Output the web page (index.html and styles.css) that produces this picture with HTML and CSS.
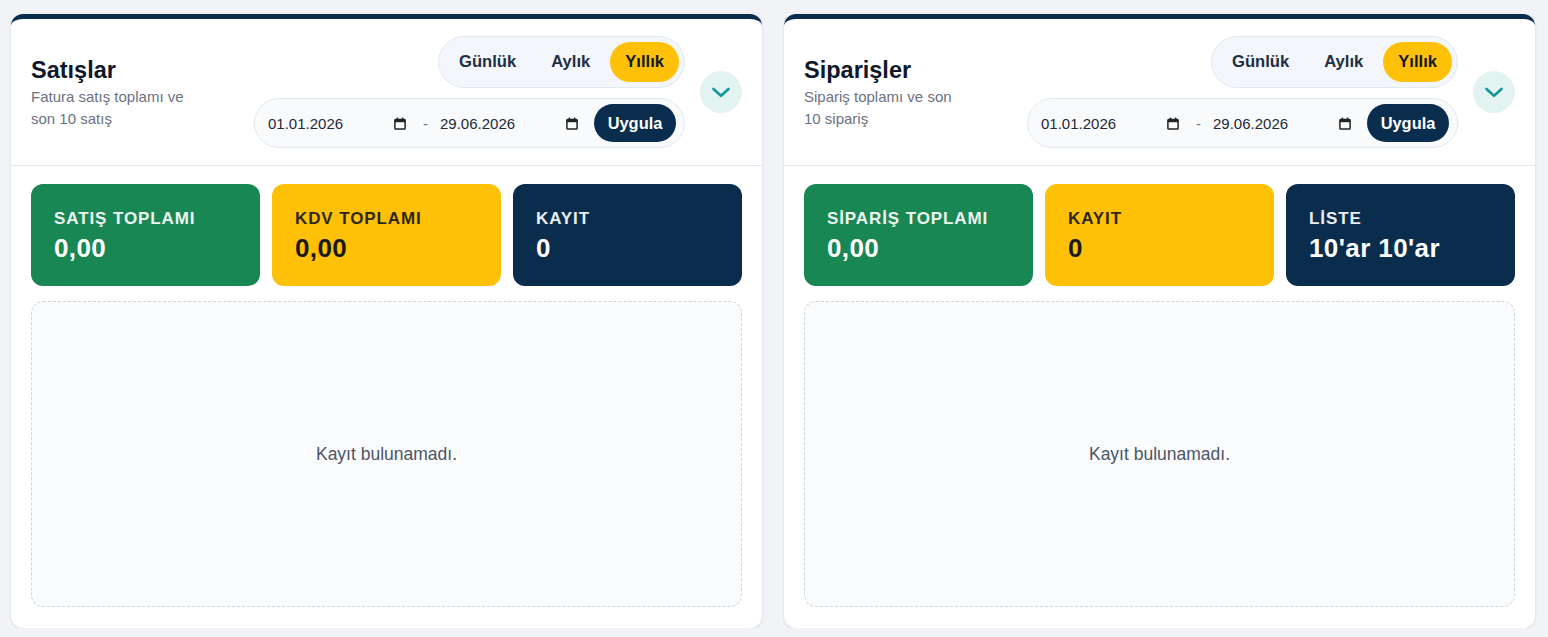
FILE: index.html
```html
<!DOCTYPE html>
<html lang="tr">
<head>
  <meta charset="UTF-8">
  <meta name="viewport" content="width=device-width, initial-scale=1.0">
  <title>Satışlar ve Siparişler</title>
  <link rel="stylesheet" href="styles.css">
</head>
<body>
  <div class="dashboard">
    <section class="panel">
      <header class="panel-header">
        <div class="panel-heading">
          <h2 class="panel-title">Satışlar</h2>
          <p class="panel-subtitle">Fatura satış toplamı ve son 10 satış</p>
        </div>
        <div class="panel-tools">
          <div class="tool-stack">
            <div class="period-switch">
              <button class="period-btn">Günlük</button>
              <button class="period-btn">Aylık</button>
              <button class="period-btn active">Yıllık</button>
            </div>
            <div class="date-range">
              <div class="date-field">
                <span>01.01.2026</span>
                <svg class="cal-icon" viewBox="0 0 12 13"><rect x="0.9" y="2.4" width="10.2" height="9.7" rx="0.8" fill="none" stroke="#222" stroke-width="1.5"/><rect x="0.9" y="2.4" width="10.2" height="2.8" fill="#222"/><rect x="2.6" y="0.6" width="1.6" height="2.4" fill="#222"/><rect x="7.8" y="0.6" width="1.6" height="2.4" fill="#222"/></svg>
              </div>
              <span class="date-sep">-</span>
              <div class="date-field">
                <span>29.06.2026</span>
                <svg class="cal-icon" viewBox="0 0 12 13"><rect x="0.9" y="2.4" width="10.2" height="9.7" rx="0.8" fill="none" stroke="#222" stroke-width="1.5"/><rect x="0.9" y="2.4" width="10.2" height="2.8" fill="#222"/><rect x="2.6" y="0.6" width="1.6" height="2.4" fill="#222"/><rect x="7.8" y="0.6" width="1.6" height="2.4" fill="#222"/></svg>
              </div>
              <button class="apply-btn">Uygula</button>
            </div>
          </div>
          <button class="collapse-btn">
            <svg viewBox="0 0 24 24"><path d="M4.5 9 L12 15.8 L19.5 9" fill="none" stroke="#17979b" stroke-width="2.7" stroke-linecap="round" stroke-linejoin="round"/></svg>
          </button>
        </div>
      </header>
      <div class="panel-body">
        <div class="stats">
          <div class="stat-card green">
            <span class="stat-label">SATIŞ TOPLAMI</span>
            <span class="stat-value">0,00</span>
          </div>
          <div class="stat-card yellow">
            <span class="stat-label">KDV TOPLAMI</span>
            <span class="stat-value">0,00</span>
          </div>
          <div class="stat-card navy">
            <span class="stat-label">KAYIT</span>
            <span class="stat-value">0</span>
          </div>
        </div>
        <div class="empty-box">Kayıt bulunamadı.</div>
      </div>
    </section>

    <section class="panel">
      <header class="panel-header">
        <div class="panel-heading">
          <h2 class="panel-title">Siparişler</h2>
          <p class="panel-subtitle">Sipariş toplamı ve son 10 sipariş</p>
        </div>
        <div class="panel-tools">
          <div class="tool-stack">
            <div class="period-switch">
              <button class="period-btn">Günlük</button>
              <button class="period-btn">Aylık</button>
              <button class="period-btn active">Yıllık</button>
            </div>
            <div class="date-range">
              <div class="date-field">
                <span>01.01.2026</span>
                <svg class="cal-icon" viewBox="0 0 12 13"><rect x="0.9" y="2.4" width="10.2" height="9.7" rx="0.8" fill="none" stroke="#222" stroke-width="1.5"/><rect x="0.9" y="2.4" width="10.2" height="2.8" fill="#222"/><rect x="2.6" y="0.6" width="1.6" height="2.4" fill="#222"/><rect x="7.8" y="0.6" width="1.6" height="2.4" fill="#222"/></svg>
              </div>
              <span class="date-sep">-</span>
              <div class="date-field">
                <span>29.06.2026</span>
                <svg class="cal-icon" viewBox="0 0 12 13"><rect x="0.9" y="2.4" width="10.2" height="9.7" rx="0.8" fill="none" stroke="#222" stroke-width="1.5"/><rect x="0.9" y="2.4" width="10.2" height="2.8" fill="#222"/><rect x="2.6" y="0.6" width="1.6" height="2.4" fill="#222"/><rect x="7.8" y="0.6" width="1.6" height="2.4" fill="#222"/></svg>
              </div>
              <button class="apply-btn">Uygula</button>
            </div>
          </div>
          <button class="collapse-btn">
            <svg viewBox="0 0 24 24"><path d="M4.5 9 L12 15.8 L19.5 9" fill="none" stroke="#17979b" stroke-width="2.7" stroke-linecap="round" stroke-linejoin="round"/></svg>
          </button>
        </div>
      </header>
      <div class="panel-body">
        <div class="stats">
          <div class="stat-card green">
            <span class="stat-label">SİPARİŞ TOPLAMI</span>
            <span class="stat-value">0,00</span>
          </div>
          <div class="stat-card yellow">
            <span class="stat-label">KAYIT</span>
            <span class="stat-value">0</span>
          </div>
          <div class="stat-card navy">
            <span class="stat-label">LİSTE</span>
            <span class="stat-value">10'ar 10'ar</span>
          </div>
        </div>
        <div class="empty-box">Kayıt bulunamadı.</div>
      </div>
    </section>
  </div>
</body>
</html>
```

FILE: styles.css
```css
:root {
  --navy: #0a2d4d;
  --green: #198754;
  --yellow: #ffc107;
  --bg-page: #f1f3f7;
  --bg-card: #ffffff;
  --bg-soft: #f3f6fa;
  --border: #e2e8f0;
  --text-primary: #0f172a;
  --text-secondary: #6b7280;
  --radius-md: 12px;
}

* {
  margin: 0;
  padding: 0;
  box-sizing: border-box;
  font-family: "Liberation Sans", Arial, sans-serif;
}

body {
  background: var(--bg-page);
  color: var(--text-primary);
}

.dashboard {
  display: grid;
  grid-template-columns: 1fr 1fr;
  gap: 22px;
  padding: 14px 13px 0 11px;
}

.panel {
  background: var(--bg-card);
  border-radius: var(--radius-md);
  border-top: 5px solid var(--navy);
  box-shadow: 0 1px 3px rgba(15, 23, 42, 0.12);
  overflow: hidden;
}

.panel-header {
  display: flex;
  align-items: center;
  justify-content: space-between;
  padding: 17px 20px;
  border-bottom: 1px solid var(--border);
}

.panel-title {
  font-size: 23.5px;
  font-weight: 700;
  line-height: 30px;
  margin-bottom: 1px;
}

.panel-subtitle {
  font-size: 15px;
  line-height: 22px;
  color: var(--text-secondary);
  max-width: 160px;
}

.panel-tools {
  display: flex;
  align-items: center;
  gap: 15px;
}

.tool-stack {
  display: flex;
  flex-direction: column;
  align-items: flex-end;
  gap: 10px;
}

.period-switch {
  display: flex;
  gap: 5px;
  padding: 5px;
  background: var(--bg-soft);
  border: 1px solid var(--border);
  border-radius: 26px;
}

.period-btn {
  height: 40px;
  padding: 0 15px;
  border: none;
  border-radius: 20px;
  background: transparent;
  font-size: 16.6px;
  font-weight: 700;
  color: #1e2e45;
  cursor: pointer;
}

.period-btn.active {
  background: var(--yellow);
  color: #111827;
}

.date-range {
  display: flex;
  align-items: center;
  height: 50px;
  padding: 0 8px 0 13px;
  background: #f8fafc;
  border: 1px solid var(--border);
  border-radius: 25px;
}

.date-field {
  display: flex;
  align-items: center;
  justify-content: space-between;
  width: 139px;
  font-size: 15px;
  color: #1f2937;
}

.cal-icon {
  width: 12px;
  height: 13px;
  margin-right: 1px;
}

.date-sep {
  width: 5px;
  margin: 0 12px 0 16px;
  font-size: 15px;
  color: #6b7280;
}

.apply-btn {
  margin-left: 15px;
  width: 82px;
  height: 38px;
  border: none;
  border-radius: 19px;
  background: var(--navy);
  color: #fff;
  font-size: 16.4px;
  font-weight: 700;
  cursor: pointer;
}

.collapse-btn {
  width: 42px;
  height: 42px;
  border: none;
  border-radius: 50%;
  background: #e3f3f2;
  display: flex;
  align-items: center;
  justify-content: center;
  cursor: pointer;
}

.collapse-btn svg {
  width: 24px;
  height: 24px;
}

.panel-body {
  padding: 18px 20px 21px;
}

.stats {
  display: grid;
  grid-template-columns: repeat(3, 1fr);
  gap: 12px;
  margin-bottom: 15px;
}

.stat-card {
  height: 102px;
  padding: 25px 23px 0;
  border-radius: var(--radius-md);
  display: flex;
  flex-direction: column;
}

.stat-card.green {
  background: var(--green);
  color: #fff;
}

.stat-card.yellow {
  background: var(--yellow);
  color: #1a1a1a;
}

.stat-card.navy {
  background: var(--navy);
  color: #fff;
}

.stat-label {
  font-size: 17px;
  font-weight: 700;
  letter-spacing: 0.9px;
  line-height: 20px;
  opacity: 0.92;
}

.stat-value {
  font-size: 26px;
  font-weight: 700;
  letter-spacing: 0.4px;
  line-height: 30px;
  margin-top: 4px;
}

.empty-box {
  height: 306px;
  border: 1px dashed #cfd6e0;
  border-radius: var(--radius-md);
  background: #fafbfd;
  display: flex;
  align-items: center;
  justify-content: center;
  font-size: 17.5px;
  color: #4b5563;
}
```
